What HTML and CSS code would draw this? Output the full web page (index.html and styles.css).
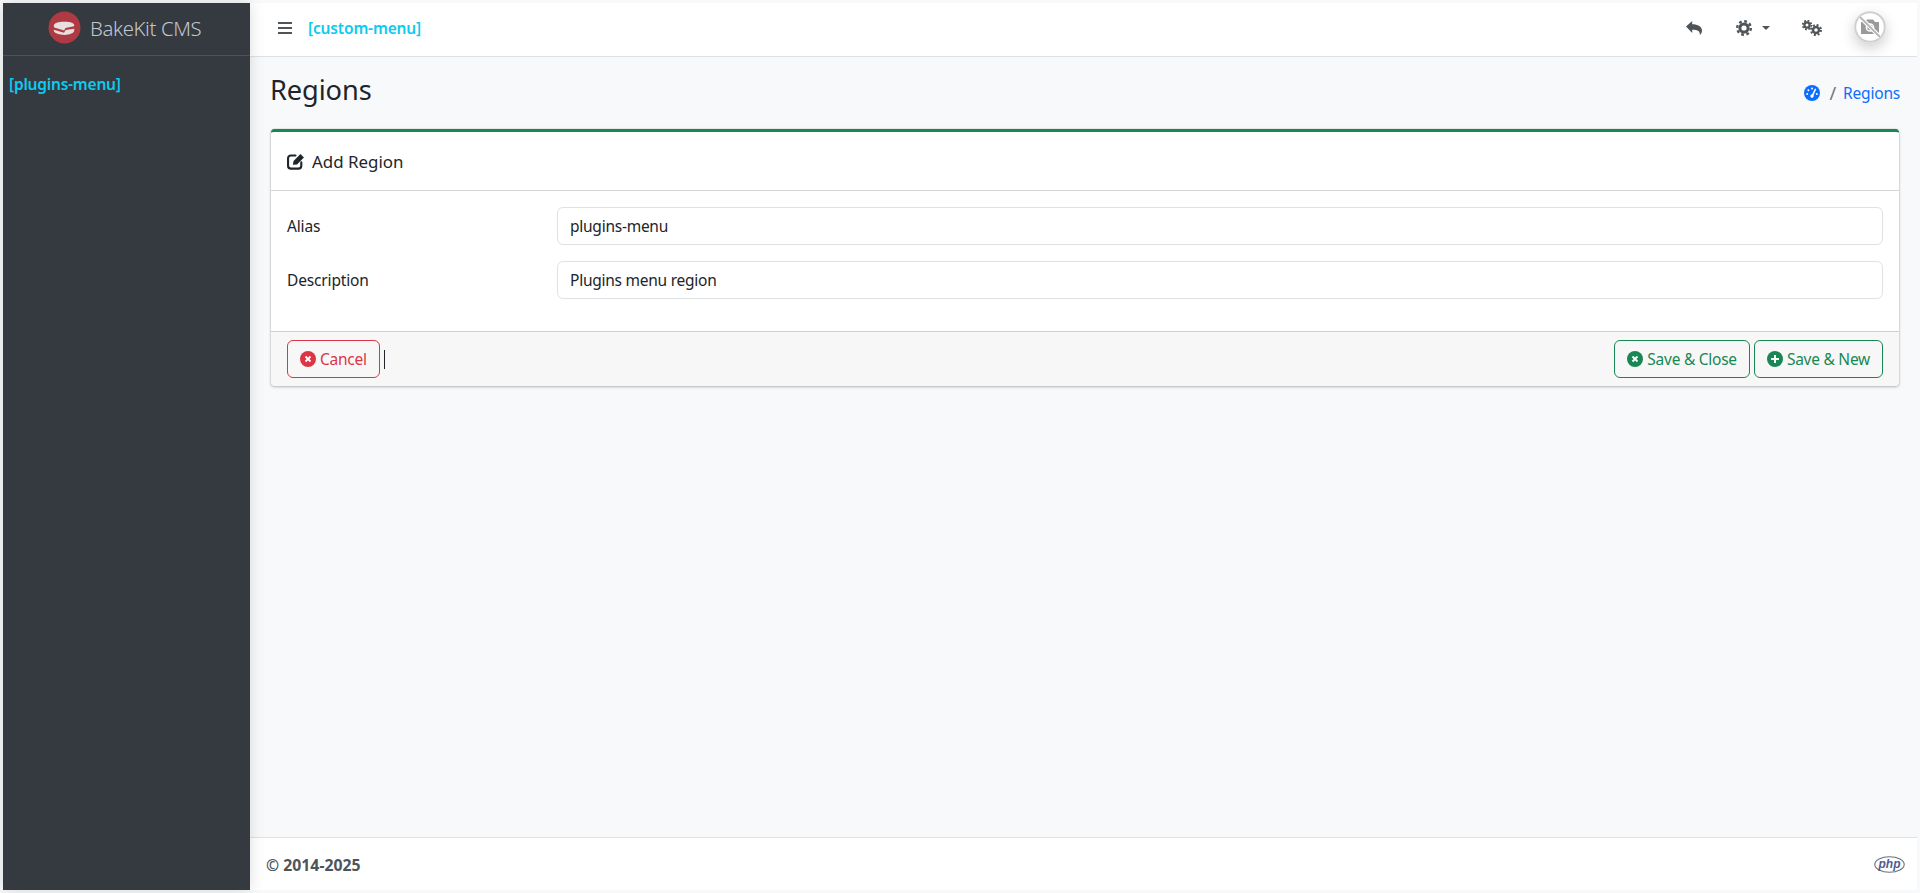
FILE: index.html
```html
<!DOCTYPE html>
<html lang="en">
<head>
<meta charset="utf-8">
<title>Regions</title>
<link rel="stylesheet" href="styles.css">
</head>
<body>
<div class="app">
  <aside class="sidebar">
    <div class="brand">
      <svg class="brand-logo" viewBox="0 0 34 34"><circle cx="17" cy="17" r="16.5" fill="#b03a44"/><path d="M6 15c0-2.500 4.500-4 11-4s10 1.500 10 3.500c0 .5 0 1-.3 1.300L18 17.500 16.700 20 6.500 17c-.3-.5-.5-1-.5-2z" fill="#e6e1df"/><path d="M6 19.300l10.500 3.200 1.800-3 8.700-1.300v2.500c-1 2.500-5 4-10 4s-10-1.500-11-4z" fill="#e6e1df"/></svg>
      <span class="brand-text">BakeKit CMS</span>
    </div>
    <div class="side-menu">[plugins-menu]</div>
  </aside>
  <div class="main">
    <header class="topbar">
      <svg class="burger" viewBox="0 0 14 12"><path d="M0 1h14M0 6h14M0 11h14" stroke="#4f5458" stroke-width="1.800"/></svg>
      <span class="custom-menu">[custom-menu]</span>
      <div class="top-actions">
        <svg class="ico reply" viewBox="0 0 16 14"><path d="M0 5.500 6.200 0v3.200c5.600 0 9.800 2.300 9.800 6.300 0 2-1 3.500-2.200 4.500.5-3.300-1.800-5.200-7.600-5.200v3.200z" fill="#4f5458"/></svg>
        <span class="gear-menu">
          <svg class="ico gear" viewBox="0 0 16 16"><circle cx="8" cy="8" r="6.800" fill="none" stroke="#4f5458" stroke-width="2.400" stroke-dasharray="2.800 2.540"/><circle cx="8" cy="8" r="4.100" fill="none" stroke="#4f5458" stroke-width="3"/></svg>
          <i class="caret"></i>
        </span>
        <svg class="ico gears" viewBox="0 0 20 16"><g fill="none" stroke="#4f5458"><circle cx="5" cy="5" r="4.300" stroke-width="1.800" stroke-dasharray="1.800 1.580"/><circle cx="5" cy="5" r="2.600" stroke-width="2.200"/><circle cx="14" cy="10" r="5" stroke-width="2" stroke-dasharray="2 1.930"/><circle cx="14" cy="10" r="3" stroke-width="2.400"/></g></svg>
        <span class="avatar">
          <svg viewBox="0 0 32 32"><circle cx="16" cy="16" r="14.800" fill="#fff" stroke="#cfcfcf" stroke-width="2"/><path d="M7 11h4l2-2.500h6l2 2.500h4v12H7z" fill="#9a9a9a"/><circle cx="16" cy="16.500" r="3.600" fill="none" stroke="#fff" stroke-width="1.500"/><path d="M6 6l20 20" stroke="#fff" stroke-width="4"/><path d="M6 6l20 20" stroke="#b5b5b5" stroke-width="1.800"/></svg>
        </span>
      </div>
    </header>
    <main class="content">
      <div class="page-head">
        <h1 class="page-title">Regions</h1>
        <nav class="crumbs">
          <svg class="gauge" viewBox="0 0 16 16"><circle cx="8" cy="8" r="8" fill="#0d6efd"/><path d="M8 11.500 11.300 4.500" stroke="#fff" stroke-width="1.700" stroke-linecap="round"/><circle cx="8" cy="11" r="1.700" fill="#fff"/><g fill="#fff"><circle cx="3.200" cy="9" r="1"/><circle cx="4.400" cy="5.200" r="1"/><circle cx="8" cy="3.500" r="1"/><circle cx="12.800" cy="9" r="1"/></g></svg>
          <span class="crumb-sep">/</span>
          <a class="crumb-link">Regions</a>
        </nav>
      </div>
      <section class="card">
        <div class="card-head">
          <svg class="edit" viewBox="0 0 17 16"><path d="M13.500 8.800V12a2.700 2.700 0 0 1-2.700 2.700H3.700A2.700 2.700 0 0 1 1 12V5a2.700 2.700 0 0 1 2.700-2.700H8" fill="none" stroke="#212529" stroke-width="2" stroke-linecap="round"/><path d="M5.500 11 6.200 7.500 12.700 1l3.300 3.300-6.500 6.500z" fill="#212529"/></svg>
          <span class="card-title">Add Region</span>
        </div>
        <div class="card-body">
          <div class="row"><label class="row-label">Alias</label><input class="field" value="plugins-menu"></div>
          <div class="row"><label class="row-label">Description</label><input class="field" value="Plugins menu region"></div>
        </div>
        <div class="card-foot">
          <a class="btn btn-red"><svg class="btn-ico" viewBox="0 0 16 16"><circle cx="8" cy="8" r="8" fill="#dc3545"/><path d="M5.500 5.500l5 5M10.500 5.500l-5 5" stroke="#fff" stroke-width="1.800"/></svg>Cancel</a>
          <i class="text-caret"></i>
          <div class="foot-right">
            <a class="btn btn-green"><svg class="btn-ico" viewBox="0 0 16 16"><circle cx="8" cy="8" r="8" fill="#198754"/><path d="M5.500 5.500l5 5M10.500 5.500l-5 5" stroke="#fff" stroke-width="1.800"/></svg>Save &amp; Close</a>
            <a class="btn btn-green"><svg class="btn-ico" viewBox="0 0 16 16"><circle cx="8" cy="8" r="8" fill="#198754"/><path d="M8 4v8M4 8h8" stroke="#fff" stroke-width="2"/></svg>Save &amp; New</a>
          </div>
        </div>
      </section>
    </main>
    <footer class="page-foot">
      <strong class="copy">© 2014-2025</strong>
      <svg class="php" viewBox="0 0 31 17"><ellipse cx="15.500" cy="8.500" rx="14.700" ry="7.700" fill="#fff" stroke="#6b6f80" stroke-width="1.100"/><text x="15.500" y="12" text-anchor="middle" class="php-text">php</text></svg>
    </footer>
  </div>
</div>
</body>
</html>
```
FILE: styles.css
```css
* { box-sizing: border-box; }
html, body { height: 100%; }
body {
  margin: 0;
  padding: 3px;
  background: #f8f9fa;
  font-family: "Noto Sans", "Open Sans", sans-serif;
  font-size: 15px;
  color: #212529;
  overflow: hidden;
}
.app { display: flex; height: 887px; }
.sidebar {
  width: 247px;
  flex: none;
  background: #343a40;
  box-shadow: 0 0 14px rgba(0,0,0,.14);
  position: relative;
  z-index: 2;
}
.brand {
  height: 53px;
  display: flex;
  align-items: center;
  padding: 0 0 3px 45px;
  gap: 9px;
  border-bottom: 1px solid #4b545c;
}
.brand-logo { width: 33px; height: 33px; flex: none; }
.brand-text { font-size: 20.300px; font-weight: 300; color: #c2c7d0; letter-spacing: -.35px; }
.side-menu { padding: 18px 0 0 6px; font-size: 15.500px; font-weight: 600; color: #0dcaf0; line-height: 21px; letter-spacing: -.2px; }
.main { flex: 1; min-width: 0; display: flex; flex-direction: column; }
.topbar {
  height: 54px;
  flex: none;
  background: #fff;
  border-bottom: 1px solid #dee2e6;
  display: flex;
  align-items: center;
  padding: 0 0 3px 28px;
}
.burger { width: 14px; height: 12px; flex: none; }
.custom-menu { margin-left: 16px; font-size: 15.500px; font-weight: 600; color: #0dcaf0; letter-spacing: -.15px; }
.top-actions { margin-left: auto; display: flex; align-items: center; padding-right: 31px; }
.ico { flex: none; display: block; }
.reply { width: 16px; height: 14px; margin-right: 34px; }
.gear-menu { display: flex; align-items: center; gap: 10px; margin-right: 32px; }
.gear { width: 16px; height: 16px; }
.caret { width: 0; height: 0; border-left: 4px solid transparent; border-right: 4px solid transparent; border-top: 4px solid #4f5458; }
.gears { width: 20px; height: 16px; margin-right: 32px; }
.avatar { width: 32px; height: 32px; border-radius: 50%; margin-top: -3px; box-shadow: 0 5px 14px rgba(0,0,0,.2); }
.avatar svg { display: block; width: 32px; height: 32px; }
.content { flex: 1; min-height: 0; padding: 0 17px 0 20px; }
.page-head { height: 72px; display: flex; align-items: center; justify-content: space-between; }
.page-title { margin: -7px 0 0; font-size: 27.200px; font-weight: 400; line-height: 32px; letter-spacing: -.1px; }
.crumbs { display: flex; align-items: center; font-size: 15.500px; }
.gauge { width: 16px; height: 16px; flex: none; }
.crumb-sep { margin: 0 7px 0 9px; font-size: 18px; line-height: 20px; color: #6c757d; }
.crumb-link { color: #0d6efd; letter-spacing: -.2px; }
.card {
  margin: 0 1px;
  background: #fff;
  border-top: 3px solid #198754;
  border-radius: 4px;
  box-shadow: 0 0 1px rgba(0,0,0,.45), 0 1px 3px rgba(0,0,0,.25);
}
.card-head { height: 59px; display: flex; align-items: center; padding-left: 16px; gap: 7px; border-bottom: 1px solid #d5d5d5; }
.edit { width: 18px; height: 17px; flex: none; }
.card-title { font-size: 16.900px; }
.card-body { padding: 16px 16px 0 16px; display: flex; flex-direction: column; gap: 16px; height: 140px; }
.row { display: flex; align-items: center; height: 38px; flex: none; }
.row-label { width: 270px; flex: none; font-size: 15.500px; letter-spacing: -.15px; }
.field {
  flex: 1;
  min-width: 0;
  height: 38px;
  padding: 0 12px;
  border: 1px solid #dee2e6;
  border-radius: 6px;
  font: inherit;
  font-size: 15.500px;
  letter-spacing: -.25px;
  color: #212529;
  background: #fff;
}
.card-foot {
  height: 55px;
  display: flex;
  align-items: center;
  padding: 0 16px 0 16px;
  background: #f7f7f7;
  border-top: 1px solid #cfcfcf;
  border-radius: 0 0 4px 4px;
}
.btn {
  height: 38px;
  padding: 0 12px;
  display: inline-flex;
  align-items: center;
  gap: 4px;
  border: 1px solid;
  border-radius: 6px;
  font-size: 15.500px;
  letter-spacing: -.25px;
  white-space: nowrap;
}
.btn-red { color: #dc3545; border-color: #dc3545; }
.btn-green { color: #198754; border-color: #198754; }
.btn-ico { width: 16px; height: 16px; flex: none; }
.text-caret { width: 1px; height: 19px; margin-left: 4px; background: #212529; }
.foot-right { margin-left: auto; display: flex; gap: 4px; }
.page-foot {
  height: 53px;
  flex: none;
  background: #fff;
  border-top: 1px solid #dee2e6;
  display: flex;
  align-items: center;
  justify-content: space-between;
  padding: 0 12px 0 16px;
}
.copy { font-size: 15.800px; font-weight: 700; color: #4f5458; margin-top: 2px; }
.php { width: 31px; height: 17px; }
.php-text { font-family: "Liberation Sans", sans-serif; font-size: 12px; font-style: italic; font-weight: 700; fill: #4f5b93; }
```
